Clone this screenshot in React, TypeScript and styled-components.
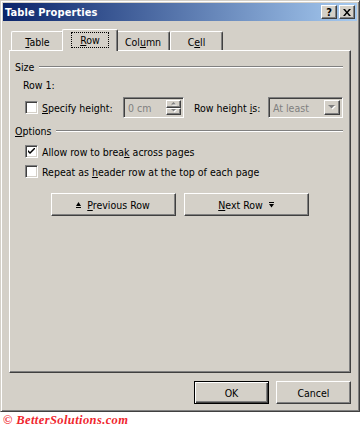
import React from "react";
import styled, { createGlobalStyle, css } from "styled-components";

const Global = createGlobalStyle`
  html, body {
    margin: 0;
    padding: 0;
    background: #ffffff;
  }
  body {
    font-family: "DejaVu Sans Condensed", "DejaVu Sans", sans-serif;
    font-size: 10.5px;
    color: #000;
  }
`;

const raised = css`
  border: 1px solid;
  border-color: #ffffff #404040 #404040 #ffffff;
  box-shadow: inset -1px -1px #808080, inset 1px 1px #d4d0c8;
`;

const sunken = css`
  border: 1px solid;
  border-color: #808080 #ffffff #ffffff #808080;
  box-shadow: inset 1px 1px #404040, inset -1px -1px #d4d0c8;
`;

const Window = styled.div`
  box-sizing: border-box;
  width: 360px;
  height: 412px;
  background: #d4d0c8;
  border: 1px solid;
  border-color: #d4d0c8 #404040 #404040 #d4d0c8;
  box-shadow: inset 1px 1px #ffffff, inset -1px -1px #808080;
  padding: 2px;
  display: flex;
  flex-direction: column;
`;

const TitleBar = styled.div`
  height: 18px;
  display: flex;
  align-items: center;
  background: linear-gradient(to right, #0a246a, #a6caf0);
  padding: 0 2px 0 2px;
`;

const Title = styled.div`
  flex: 1;
  color: #ffffff;
  font-weight: bold;
  font-size: 11px;
  letter-spacing: 0.1px;
`;

const TitleButton = styled.div<{ $gap?: boolean }>`
  ${raised};
  box-sizing: border-box;
  width: 16px;
  height: 14px;
  background: #d4d0c8;
  display: flex;
  align-items: center;
  justify-content: center;
  margin-left: ${(p) => (p.$gap ? "2px" : "0")};
  font-weight: bold;
  font-size: 11px;
  line-height: 1;
`;

const Body = styled.div`
  padding: 8px 6px 0 6px;
  display: flex;
  flex-direction: column;
`;

const Tabs = styled.div`
  height: 21px;
  display: flex;
  align-items: flex-end;
  padding-left: 2px;
`;

const Tab = styled.div<{ $w: number; $active?: boolean }>`
  box-sizing: border-box;
  width: ${(p) => p.$w}px;
  height: 19px;
  background: #d4d0c8;
  border-top: 1px solid #ffffff;
  border-left: 1px solid #ffffff;
  border-right: 1px solid #404040;
  border-radius: 2px 2px 0 0;
  box-shadow: inset -1px 0 #808080;
  display: flex;
  align-items: center;
  justify-content: center;
  padding-top: 1px;
  ${(p) =>
    p.$active &&
    css`
      width: ${p.$w + 4}px;
      height: 22px;
      margin: 0 -2px -1px -2px;
      position: relative;
      z-index: 1;
      padding-bottom: 3px;
    `}
`;

const Focus = styled.span`
  outline: 1px dotted #000;
  outline-offset: 1px;
  padding: 0 7px;
`;

const U = styled.span`
  text-decoration: underline;
  text-underline-offset: 1px;
`;

const Panel = styled.div`
  box-sizing: border-box;
  height: 323px;
  border: 1px solid;
  border-color: #ffffff #404040 #404040 #ffffff;
  box-shadow: inset -1px -1px #808080;
  display: flex;
  flex-direction: column;
`;

const SectionHeader = styled.div<{ $top: number }>`
  display: flex;
  align-items: center;
  height: 14px;
  margin-top: ${(p) => p.$top}px;
  padding: 0 7px 0 5px;
  gap: 5px;
`;

const Etch = styled.div`
  flex: 1;
  height: 0;
  border-top: 1px solid #808080;
  border-bottom: 1px solid #ffffff;
`;

const Row = styled.div<{ $top: number; $left: number; $h: number }>`
  display: flex;
  align-items: center;
  height: ${(p) => p.$h}px;
  margin-top: ${(p) => p.$top}px;
  padding-left: ${(p) => p.$left}px;
`;

const Box = styled.div`
  ${sunken};
  box-sizing: border-box;
  width: 13px;
  height: 13px;
  background: #ffffff;
  margin-right: 4px;
  display: flex;
  align-items: center;
  justify-content: center;
`;

const Label = styled.span<{ $w?: number; $left?: number }>`
  ${(p) => p.$w && `width: ${p.$w}px; flex: none;`}
  margin-left: ${(p) => p.$left || 0}px;
`;

const Field = styled.div<{ $w: number }>`
  ${sunken};
  box-sizing: border-box;
  width: ${(p) => p.$w}px;
  height: 21px;
  background: #d4d0c8;
  display: flex;
  align-items: stretch;
  padding: 2px;
  color: #808080;
`;

const FieldText = styled.div`
  flex: 1;
  display: flex;
  align-items: center;
  padding-left: 2px;
`;

const SpinCol = styled.div`
  width: 15px;
  display: flex;
  flex-direction: column;
`;

const SpinBtn = styled.div`
  ${raised};
  box-sizing: border-box;
  flex: 1;
  display: flex;
  align-items: center;
  justify-content: center;
`;

const DropBtn = styled.div`
  ${raised};
  box-sizing: border-box;
  width: 16px;
  display: flex;
  align-items: center;
  justify-content: center;
`;

const NavRow = styled.div`
  display: flex;
  justify-content: center;
  gap: 8px;
  margin-top: 15px;
  padding-right: 1px;
`;

const Button = styled.div<{ $w: number; $default?: boolean }>`
  box-sizing: border-box;
  width: ${(p) => p.$w}px;
  height: 23px;
  background: #d4d0c8;
  display: flex;
  align-items: center;
  justify-content: center;
  gap: 6px;
  ${(p) =>
    p.$default
      ? css`
          border: 1px solid #000;
          box-shadow: inset 1px 1px #ffffff, inset -1px -1px #404040,
            inset -2px -2px #808080;
        `
      : raised};
`;

const Footer = styled.div`
  display: flex;
  justify-content: flex-end;
  gap: 7px;
  margin-top: 8px;
`;

const Credit = styled.div`
  padding: 1px 0 0 3px;
  font-family: "Liberation Serif", serif;
  font-style: italic;
  font-weight: bold;
  font-size: 12.5px;
  color: #f0262e;
  letter-spacing: 0.4px;
`;

const Tri = ({ down, disabled }: { down?: boolean; disabled?: boolean }) => (
  <svg width="8" height="5" viewBox="0 0 8 5">
    {disabled && (
      <polygon
        points={down ? "1,1 8,1 4.5,4.5" : "4.5,1 8,4.5 1,4.5"}
        fill="#ffffff"
      />
    )}
    <polygon
      points={down ? "0,0 7,0 3.5,3.5" : "3.5,0 7,3.5 0,3.5"}
      fill={disabled ? "#808080" : "#000"}
    />
  </svg>
);

const SmallTri = ({ down }: { down?: boolean }) => (
  <svg width="6" height="4" viewBox="0 0 6 4">
    <polygon
      points={down ? "1,1 6,1 3.5,3.5" : "3.5,1 6,3.5 1,3.5"}
      fill="#ffffff"
    />
    <polygon
      points={down ? "0,0 5,0 2.5,2.5" : "2.5,0 5,2.5 0,2.5"}
      fill="#808080"
    />
  </svg>
);

const BarArrow = ({ down }: { down?: boolean }) => (
  <svg width="5" height="6" viewBox="0 0 5 6">
    {down ? (
      <>
        <rect x="0" y="0" width="5" height="1" fill="#000" />
        <polygon points="0,2 5,2 2.5,5.5" fill="#000" />
      </>
    ) : (
      <>
        <polygon points="2.5,0 5,4 0,4" fill="#000" />
        <rect x="0" y="5" width="5" height="1" fill="#000" />
      </>
    )}
  </svg>
);

const Check = () => (
  <svg width="7" height="7" viewBox="0 0 7 7">
    <path d="M0 2 L0 4 L2 6 L7 1 L7 -1 L2 4 Z" fill="#000" />
  </svg>
);

export default function App() {
  return (
    <>
      <Global />
      <Window>
        <TitleBar>
          <Title>Table Properties</Title>
          <TitleButton>?</TitleButton>
          <TitleButton $gap>
            <svg width="8" height="7" viewBox="0 0 8 7">
              <path
                d="M0 0 L2 0 L4 2.5 L6 0 L8 0 L5 3.5 L8 7 L6 7 L4 4.5 L2 7 L0 7 L3 3.5 Z"
                fill="#000"
              />
            </svg>
          </TitleButton>
        </TitleBar>
        <Body>
          <Tabs>
            <Tab $w={53}>
              <span>
                <U>T</U>able
              </span>
            </Tab>
            <Tab $w={52} $active>
              <Focus>
                <U>R</U>ow
              </Focus>
            </Tab>
            <Tab $w={54}>
              <span>
                Col<U>u</U>mn
              </span>
            </Tab>
            <Tab $w={53}>
              <span>
                C<U>e</U>ll
              </span>
            </Tab>
          </Tabs>
          <Panel>
            <SectionHeader $top={9}>
              <span>Size</span>
              <Etch />
            </SectionHeader>
            <Row $top={4} $left={13} $h={14}>
              Row 1:
            </Row>
            <Row $top={5} $left={15} $h={21}>
              <Box />
              <Label $w={81}>
                <U>S</U>pecify height:
              </Label>
              <Field $w={61}>
                <FieldText>0 cm</FieldText>
                <SpinCol>
                  <SpinBtn>
                    <SmallTri />
                  </SpinBtn>
                  <SpinBtn>
                    <SmallTri down />
                  </SpinBtn>
                </SpinCol>
              </Field>
              <Label $w={74} $left={10}>
                Row height <U>i</U>s:
              </Label>
              <Field $w={75}>
                <FieldText>At least</FieldText>
                <DropBtn>
                  <Tri down disabled />
                </DropBtn>
              </Field>
            </Row>
            <SectionHeader $top={6}>
              <span>
                <U>O</U>ptions
              </span>
              <Etch />
            </SectionHeader>
            <Row $top={7} $left={15} $h={13}>
              <Box>
                <Check />
              </Box>
              <span>
                Allow row to brea<U>k</U> across pages
              </span>
            </Row>
            <Row $top={7} $left={15} $h={13}>
              <Box />
              <span>
                Repeat as <U>h</U>eader row at the top of each page
              </span>
            </Row>
            <NavRow>
              <Button $w={125}>
                <BarArrow />
                <span>
                  <U>P</U>revious Row
                </span>
              </Button>
              <Button $w={125}>
                <span>
                  <U>N</U>ext Row
                </span>
                <BarArrow down />
              </Button>
            </NavRow>
          </Panel>
          <Footer>
            <Button $w={75} $default>
              OK
            </Button>
            <Button $w={75}>Cancel</Button>
          </Footer>
        </Body>
      </Window>
      <Credit>© BetterSolutions.com</Credit>
    </>
  );
}
